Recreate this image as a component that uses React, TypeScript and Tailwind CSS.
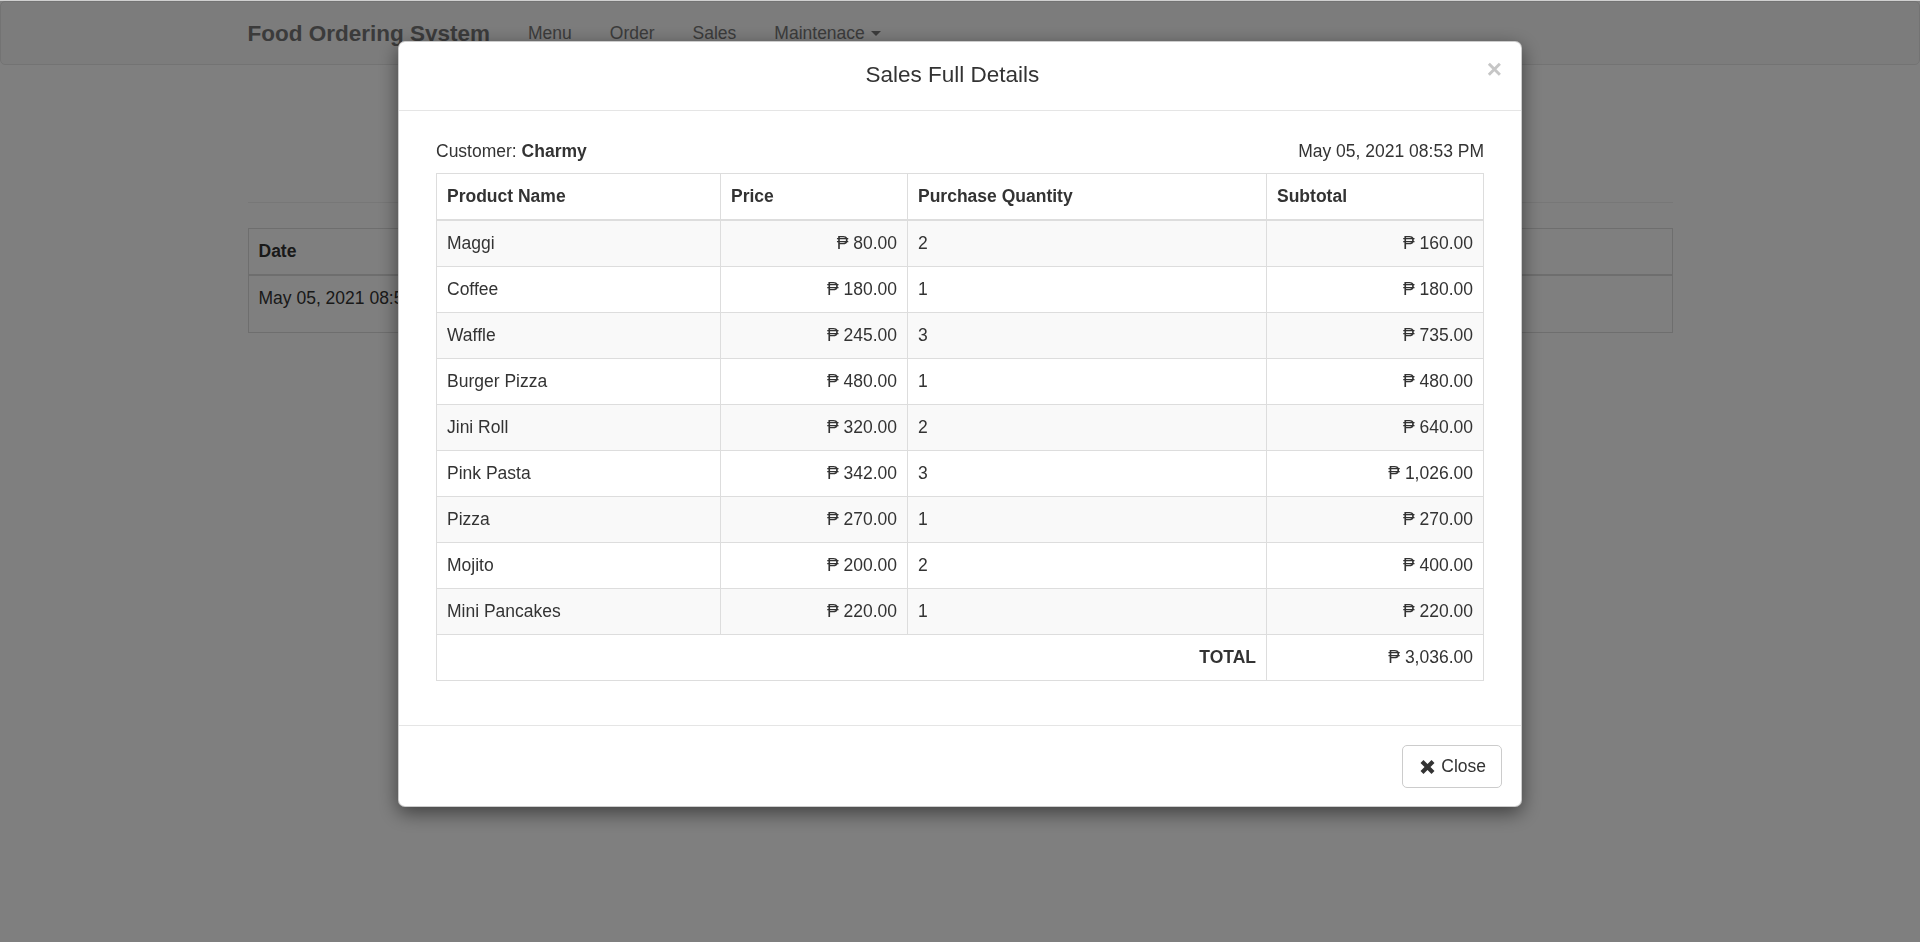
import React from "react";

const items = [
  { name: "Maggi", price: "80.00", qty: 2, subtotal: "160.00" },
  { name: "Coffee", price: "180.00", qty: 1, subtotal: "180.00" },
  { name: "Waffle", price: "245.00", qty: 3, subtotal: "735.00" },
  { name: "Burger Pizza", price: "480.00", qty: 1, subtotal: "480.00" },
  { name: "Jini Roll", price: "320.00", qty: 2, subtotal: "640.00" },
  { name: "Pink Pasta", price: "342.00", qty: 3, subtotal: "1,026.00" },
  { name: "Pizza", price: "270.00", qty: 1, subtotal: "270.00" },
  { name: "Mojito", price: "200.00", qty: 2, subtotal: "400.00" },
  { name: "Mini Pancakes", price: "220.00", qty: 1, subtotal: "220.00" },
];

const cell = "border border-[#ddd] p-[10px] leading-[25px]";

function Navbar() {
  return (
    <nav className="border border-[#e7e7e7] bg-[#f8f8f8] rounded-[5px] mb-[25px]">
      <div className="w-[1463px] mx-auto px-[19px] h-[62px] flex items-center">
        <span className="text-[22.5px] leading-[25px] font-bold text-[#777] pr-[19px]">
          Food Ordering System
        </span>
        {["Menu", "Order", "Sales"].map((l) => (
          <span key={l} className="px-[19px] text-[17.5px] leading-[25px] text-[#777]">
            {l}
          </span>
        ))}
        <span className="px-[19px] text-[17.5px] leading-[25px] text-[#777] flex items-center">
          Maintenace
          <span className="inline-block w-0 h-0 ml-[6px] border-t-[5px] border-x-[5px] border-x-transparent border-t-[#777]" />
        </span>
      </div>
    </nav>
  );
}

function Page() {
  return (
    <div className="bg-white text-[#333]">
      <Navbar />
      <div className="w-[1463px] mx-auto px-[19px]">
        {/* page heading sits behind the modal */}
        <div className="pt-[25px] pb-[12.5px] h-[87px]" />
        <div className="border-t border-[#eee] my-[25px]" />
        <table className="w-full border-collapse text-[17.5px]">
          <thead>
            <tr>
              <th className={`${cell} border-b-2 text-left font-bold w-[356px]`}>Date</th>
              <th className={`${cell} border-b-2`} />
              <th className={`${cell} border-b-2`} />
              <th className={`${cell} border-b-2`} />
            </tr>
          </thead>
          <tbody>
            <tr>
              <td className={`${cell} align-top h-[57px] whitespace-nowrap overflow-hidden`}>
                May 05, 2021 08:53 PM
              </td>
              <td className={cell} />
              <td className={cell} />
              <td className={cell} />
            </tr>
          </tbody>
        </table>
      </div>
    </div>
  );
}

function RemoveIcon() {
  return (
    <svg width="15" height="14" viewBox="0 0 15 14" className="ml-[2px]">
      <path d="M2 1.5 L13 12.5 M13 1.5 L2 12.5" stroke="#333" strokeWidth="4.2" />
    </svg>
  );
}

function SalesModal() {
  return (
    <div className="w-[1124px] mx-auto mt-[40px] bg-white border border-black/20 rounded-[7px] shadow-[0_6px_19px_rgba(0,0,0,0.5)] text-[#333]">
      <div className="flex items-start px-[19px] pt-[17px] pb-[19px] border-b border-[#e5e5e5]">
        <h4 className="flex-1 text-center text-[22.5px] leading-[32px]">Sales Full Details</h4>
        <button className="text-[26px] leading-none font-bold text-[#c6c6c6] -mt-[3px]">×</button>
      </div>

      <div className="px-[18px] pt-[28px] pb-[19px]">
        <div className="px-[19px]">
          <div className="flex justify-between text-[17.5px] leading-[25px] mb-[9px]">
            <span>
              Customer: <b>Charmy</b>
            </span>
            <span>May 05, 2021 08:53 PM</span>
          </div>

          <table className="w-full table-fixed border-collapse text-[17.5px] mb-[25px]">
            <colgroup>
              <col className="w-[284px]" />
              <col className="w-[187px]" />
              <col className="w-[359px]" />
              <col />
            </colgroup>
            <thead>
              <tr>
                <th className={`${cell} border-b-2 text-left font-bold`}>Product Name</th>
                <th className={`${cell} border-b-2 text-left font-bold`}>Price</th>
                <th className={`${cell} border-b-2 text-left font-bold`}>Purchase Quantity</th>
                <th className={`${cell} border-b-2 text-left font-bold`}>Subtotal</th>
              </tr>
            </thead>
            <tbody>
              {items.map((it, i) => (
                <tr key={it.name} className={i % 2 === 0 ? "bg-[#f9f9f9]" : "bg-white"}>
                  <td className={cell}>{it.name}</td>
                  <td className={`${cell} text-right`}>₱ {it.price}</td>
                  <td className={cell}>{it.qty}</td>
                  <td className={`${cell} text-right`}>₱ {it.subtotal}</td>
                </tr>
              ))}
              <tr>
                <td colSpan={3} className={`${cell} text-right font-bold`}>
                  TOTAL
                </td>
                <td className={`${cell} text-right`}>₱ 3,036.00</td>
              </tr>
            </tbody>
          </table>
        </div>
      </div>

      <div className="flex justify-end px-[19px] pt-[19px] pb-[18px] border-t border-[#e5e5e5]">
        <button className="flex items-center h-[43px] px-[15px] border border-[#ccc] rounded-[5px] bg-white text-[17.5px] text-[#333]">
          <RemoveIcon />
          <span className="ml-[6px]">Close</span>
        </button>
      </div>
    </div>
  );
}

export default function App() {
  return (
    <div className="font-['Liberation_Sans',Arial,sans-serif] min-h-[942px] bg-white">
      <div className="h-px bg-[#d0d0d0]" />
      <Page />
      <div className="fixed inset-x-0 bottom-0 top-px bg-black/50 overflow-auto">
        <SalesModal />
      </div>
    </div>
  );
}
